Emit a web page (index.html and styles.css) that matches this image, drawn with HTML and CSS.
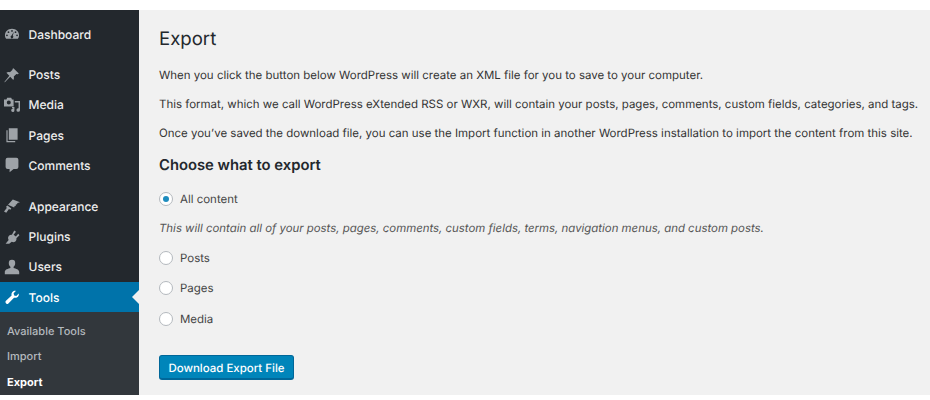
FILE: index.html
```html
<!DOCTYPE html>
<html lang="en">
<head>
<meta charset="utf-8">
<title>Export</title>
<link rel="stylesheet" href="styles.css">
</head>
<body>
<div class="frame">
  <nav class="sidebar">
    <ul class="group first">
      <li class="item"><svg class="ico" viewBox="0 0 20 20"><path fill-rule="evenodd" d="M10 3.500C5 3.500 1.200 7.200 1.200 11.500c0 1.800.6 3.300 1.500 4.500h14.600c.9-1.200 1.500-2.700 1.500-4.500 0-4.300-3.800-8-8.800-8zM10 5a1.100 1.100 0 1 1 0 2.200A1.100 1.100 0 0 1 10 5zM5.600 6.600a1.100 1.100 0 1 1 0 2.200 1.100 1.100 0 0 1 0-2.200zM14.400 6.600a1.100 1.100 0 1 1 0 2.200 1.100 1.100 0 0 1 0-2.200zM3.700 10.500a1.100 1.100 0 1 1 0 2.200 1.100 1.100 0 0 1 0-2.200zM16.300 10.500a1.100 1.100 0 1 1 0 2.200 1.100 1.100 0 0 1 0-2.200zM12.300 7.200 11 12.300a1.700 1.700 0 1 1-1.500-.3z"/></svg>Dashboard</li>
    </ul>
    <ul class="group">
      <li class="item"><svg class="ico" viewBox="0 0 20 20"><path d="M11.800 1.500 18.500 8l-1.300 1-1.700-.4-3.300 3.300c.5 1.800.2 3.300-.6 4.300L7.800 12.300 1 19l-.6-.4L6.700 11 3 7.200c1.100-.8 2.600-1.100 4.400-.6l3.300-3.200-.2-1z"/></svg>Posts</li>
      <li class="item"><svg class="ico" viewBox="0 0 20 20"><path fill-rule="evenodd" d="M0 3h3l1-2h5l1 2h2v9H0zM6 4.500a2.500 2.500 0 1 0 0 5 2.500 2.500 0 0 0 0-5zM13.500 5H20v11.200a2.200 2.200 0 1 1-1.800-2.100V7h-4.700zM10 12.500h3v4.200a2 2 0 1 1-1.500-1.900v-.8H10z"/></svg>Media</li>
      <li class="item"><svg class="ico" viewBox="0 0 20 20"><path d="M6 1.500h11V16H6zM3 4h1.500v13.500H14V19H3z"/></svg>Pages</li>
      <li class="item"><svg class="ico" viewBox="0 0 20 20"><path d="M4.500 1h11A2.500 2.500 0 0 1 18 3.500v9a2.500 2.500 0 0 1-2.500 2.500H12l-5 4v-4H4.500A2.500 2.500 0 0 1 2 12.500v-9A2.500 2.500 0 0 1 4.500 1z"/></svg>Comments</li>
    </ul>
    <ul class="group">
      <li class="item"><svg class="ico" viewBox="0 0 20 20"><path d="M11 2l9 3.200-3.200 1-.5 1.700-1.500.2-.2 1.800-1.500.4-.4 1.700L5 8.500zM4.300 9.500l4.900 3.600-1.300 1.500-1.700-1L2.800 18.500 0 17l3.700-4.800-1.400-1z"/></svg>Appearance</li>
      <li class="item"><svg class="ico" viewBox="0 0 20 20"><path d="M12.800 2 15 3.500l-3 3.700 2.800 2.300 3-3.500 1.500 1.700L15.500 11.700c.4 1.400-.2 2.800-1.300 3.800-1.300 1.100-3 1.300-4.500.5L6.500 18.500H2l3.800-4.800c-1.100-1.700-.9-3.700.4-5.200 1-1 2.300-1.500 3.700-1.200z"/></svg>Plugins</li>
      <li class="item"><svg class="ico" viewBox="0 0 20 20"><path d="M10 1a4 4 0 0 1 4 4.200c0 2-1.100 3.800-2 4.500v1.700c2.800.9 7 2 7 4.800V19H1v-2.800c0-2.800 4.200-3.900 7-4.800V9.700c-.9-.7-2-2.500-2-4.500A4 4 0 0 1 10 1z"/></svg>Users</li>
      <li class="item current"><svg class="ico" viewBox="0 0 20 20"><path d="M18.500 5.500c.3 2-.5 3.800-2 4.800-1.200.8-2.700.9-4 .5L5.500 18a2.100 2.100 0 0 1-3.300-.4 2.100 2.100 0 0 1 .3-2.800l7-6.700c-.4-1.500 0-3 1-4.200 1.100-1.200 2.700-1.800 4.300-1.500l-2.800 3 .7 2.600 2.600.6z"/></svg>Tools<span class="notch"></span></li>
    </ul>
    <ul class="submenu">
      <li>Available Tools</li>
      <li>Import</li>
      <li class="on">Export</li>
    </ul>
  </nav>
  <main class="content">
    <h1>Export</h1>
    <p>When you click the button below WordPress will create an XML file for you to save to your computer.</p>
    <p>This format, which we call WordPress eXtended RSS or WXR, will contain your posts, pages, comments, custom fields, categories, and tags.</p>
    <p>Once you’ve saved the download file, you can use the Import function in another WordPress installation to import the content from this site.</p>
    <h2>Choose what to export</h2>
    <div class="option"><span class="radio checked"></span>All content</div>
    <p class="note">This will contain all of your posts, pages, comments, custom fields, terms, navigation menus, and custom posts.</p>
    <div class="option"><span class="radio"></span>Posts</div>
    <div class="option"><span class="radio pages"></span>Pages</div>
    <div class="option"><span class="radio"></span>Media</div>
    <button class="primary">Download Export File</button>
  </main>
</div>
</body>
</html>
```
FILE: styles.css
```css
* { box-sizing: border-box; }
html, body { margin: 0; padding: 0; background: #fff; }
body { font-family: Inter, "Liberation Sans", sans-serif; overflow: hidden; text-rendering: geometricPrecision; }
.frame { display: flex; height: 385px; margin-top: 10px; background: #f1f1f1; }
.sidebar { width: 139px; flex: none; background: #23282d; color: #eee; font-size: 12px; font-weight: 500; }
ul { list-style: none; margin: 0; padding: 0; }
.group { margin-top: 10.600px; }
.group.first { margin-top: 9px; }
.first + .group { margin-top: 10.100px; }
.item { position: relative; display: flex; align-items: center; height: 30.300px; color: #eee; }
.ico { width: 16px; height: 16px; fill: #9ea3a8; margin-left: 4px; margin-right: 8.500px; flex: none; }
.current { background: #0073aa; color: #fff; }
.current .ico { fill: #fff; }
.notch { position: absolute; right: 0; top: 8px; border: 7px solid transparent; border-left: 0; border-right-color: #f1f1f1; }
.submenu { background: #32373c; color: #b4b9be; font-size: 11px; font-weight: 500; height: 83px; padding: 5.700px 0 0 7px; }
.submenu li { height: 25.500px; display: flex; align-items: center; }
.submenu .on { color: #fff; font-weight: 700; }
.content { flex: 1; min-width: 0; padding: 0 0 0 20px; color: #23282d; font-size: 11.480px; white-space: nowrap; }
h1 { margin: 16px 0 0; font-size: 18.600px; line-height: 26px; font-weight: 400; color: #23282d; }
p { margin: 0; }
.content > p { height: 29px; line-height: 15px; color: #333; }
h1 + p { margin-top: 16px; }
h2 { margin: 1px 0 0; font-size: 14.800px; line-height: 18px; font-weight: 600; color: #23282d; }
.option { display: flex; align-items: center; height: 30.600px; color: #444; }
h2 + .option { margin-top: 10px; }
.radio { width: 14px; height: 14px; border-radius: 50%; background: #fff; border: 1px solid #b4b9be; margin-right: 7px; display: flex; align-items: center; justify-content: center; flex: none; }
.checked::after { content: ""; width: 6px; height: 6px; border-radius: 50%; background: #1e8cbe; }
.content > p.note { height: 29px; line-height: 29px; font-size: 11.420px; font-style: italic; color: #555; margin-top: -1px; }
.primary { display: block; margin-top: 21px; width: 135px; height: 25px; padding: 1px 0 0; border: 1px solid #006799; border-bottom-width: 2px; border-radius: 3px; background: #0085ba; color: #fff; font: 500 11.470px Inter, "Liberation Sans", sans-serif; text-rendering: geometricPrecision; }
```
